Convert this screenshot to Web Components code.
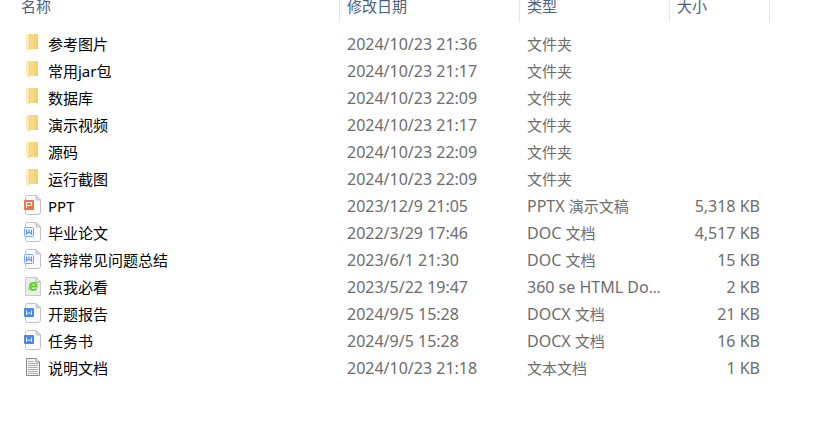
<!DOCTYPE html>
<html lang="zh-CN">
<head>
<meta charset="utf-8">
<title>文件</title>
<style>
  body {
    margin: 0;
    background: #fff;
    font-family: "Noto Sans", "Noto Sans CJK SC", sans-serif;
    font-size: 15px;
  }
</style>
</head>
<body>
<file-list>
  <file-entry icon="folder" modified="2024/10/23 21:36" type="文件夹">参考图片</file-entry>
  <file-entry icon="folder" modified="2024/10/23 21:17" type="文件夹">常用jar包</file-entry>
  <file-entry icon="folder" modified="2024/10/23 22:09" type="文件夹">数据库</file-entry>
  <file-entry icon="folder" modified="2024/10/23 21:17" type="文件夹">演示视频</file-entry>
  <file-entry icon="folder" modified="2024/10/23 22:09" type="文件夹">源码</file-entry>
  <file-entry icon="folder" modified="2024/10/23 22:09" type="文件夹">运行截图</file-entry>
  <file-entry icon="slides" modified="2023/12/9 21:05" type="PPTX 演示文稿" size="5,318 KB">PPT</file-entry>
  <file-entry icon="doc" modified="2022/3/29 17:46" type="DOC 文档" size="4,517 KB">毕业论文</file-entry>
  <file-entry icon="doc" modified="2023/6/1 21:30" type="DOC 文档" size="15 KB">答辩常见问题总结</file-entry>
  <file-entry icon="html" modified="2023/5/22 19:47" type="360 se HTML Document" size="2 KB">点我必看</file-entry>
  <file-entry icon="docx" modified="2024/9/5 15:28" type="DOCX 文档" size="21 KB">开题报告</file-entry>
  <file-entry icon="docx" modified="2024/9/5 15:28" type="DOCX 文档" size="16 KB">任务书</file-entry>
  <file-entry icon="text" modified="2024/10/23 21:18" type="文本文档" size="1 KB">说明文档</file-entry>
</file-list>

<script>
const PAGE = `
  <path d="M3.5.5H12L16.5 5V17Q16.5 19.5 14 19.5H3.5Q1.5 19.5 1.5 17.5V2.5Q1.5.5 3.5.5Z" fill="#fcfcfc" stroke="#c2c2c2"/>
  <path d="M12 .5V5H16.5Z" fill="#dcdcdc" stroke="#c2c2c2" stroke-linejoin="round"/>`;

const ICONS = {
  folder: `
    <path d="M4 1H14V16H4Z" fill="#f8da86"/>
    <path d="M10 1H14V16H10Z" fill="#f5d178"/>
    <path d="M13 12H14V16H13Z" fill="#edc45f"/>
    <path d="M2 1L5 3V18L2 16Z" fill="#ffecb3"/>
    <path d="M5.3 3V17.5" stroke="#f1cc72" stroke-width=".7"/>`,
  slides: PAGE + `
    <rect x="0" y="5" width="10" height="10" rx="1" fill="#f4703f"/>
    <path d="M2.5 13V7.5H7.5V10.500H3" fill="none" stroke="#fff" stroke-width="1.2"/>`,
  doc: PAGE + `
    <rect x=".5" y="5.500" width="9" height="9" rx="1" fill="#fff" stroke="#77a5f8"/>
    <path d="M2.500 7.500V12L5 10L7.500 12V7.500M5 7.500V10" fill="none" stroke="#5a92f5" stroke-width="1.3"/>`,
  docx: PAGE + `
    <rect x="0" y="5" width="10" height="9" rx="1" fill="#4a87ee"/>
    <path d="M2.500 7.500V11.500L5 9.500L7.500 11.500V7.500" fill="none" stroke="#e6effd" stroke-width="1"/>`,
  html: `
    <path d="M1.5 1.5H12L16.5 6V19.5H1.5Z" fill="#ebebeb" stroke="#cacaca"/>
    <path d="M12 1.5V6H16.5Z" fill="#fff" stroke="#b5b5b5"/>
    <path d="M6 10.500H12.500Q12.500 7 9.300 7Q6 7 6 10.500Q6 14 9.300 14Q11.500 14 12.300 12.500" fill="none" stroke="#5fd02f" stroke-width="2"/>
    <path d="M4.500 14.500Q4 12 8 8.500Q12 5.500 14 6.500" fill="none" stroke="#7bdc48"/>`,
  text: `
    <path d="M2.500 1.500H12L15.500 5V18.500H2.500Z" fill="#f7f7f7" stroke="#858585"/>
    <path d="M12 1.500V5H15.500" fill="#fff" stroke="#858585"/>
    <path d="M4 4.500H10M4 6.500H14M4 8.500H14M4 10.500H14M4 12.500H14M4 14.500H14M4 16.500H14" stroke="#acacac"/>`
};

class FileIcon extends HTMLElement {
  constructor() {
    super();
    this.attachShadow({ mode: "open" });
  }

  connectedCallback() {
    this.shadowRoot.innerHTML = `
      <style>
        :host {
          display: block;
          flex: none;
        }

        svg {
          display: block;
        }
      </style>
      <svg width="18" height="23" viewBox="0 0 18 23" aria-hidden="true">${ICONS[this.getAttribute("name")] || PAGE}</svg>
    `;
  }
}

// Holds the data of one row; file-list draws it
class FileEntry extends HTMLElement {
  constructor() {
    super();
    this.attachShadow({ mode: "open" });
    this.shadowRoot.innerHTML = `
      <style>
        :host {
          display: inline;
        }
      </style>
      <slot></slot>
    `;
  }

  get icon() {
    return this.getAttribute("icon");
  }

  get modified() {
    return this.getAttribute("modified");
  }

  get type() {
    return this.getAttribute("type");
  }

  get size() {
    return this.getAttribute("size") || "";
  }
}

class FileList extends HTMLElement {
  constructor() {
    super();
    this.attachShadow({ mode: "open", slotAssignment: "manual" });
    this.render();
  }

  render() {
    const styles = `
      <style>
        :host {
          display: block;
        }

        table {
          width: 100%;
          table-layout: fixed;
          border-collapse: separate;
          border-spacing: 0;
        }

        .name { width: 340px; }
        .modified { width: 180px; }
        .type { width: 150px; }
        .size { width: 100px; }

        th {
          box-sizing: border-box;
          height: 22px;
          padding: 0 7px;
          border-right: 1px solid #e5e5e5;
          text-align: left;
          vertical-align: top;
        }

        th:first-child {
          padding-left: 21px;
        }

        button {
          display: block;
          padding: 0;
          border: 0;
          background: none;
          color: #4c607a;
          font: inherit;
          font-weight: 400;
          line-height: 12px;
        }

        tbody::before {
          content: "";
          display: block;
          height: 9px;
        }

        td {
          height: 27px;
          padding: 0 10px 0 7px;
          overflow: hidden;
          color: #6d6d6d;
          line-height: 27px;
          text-overflow: ellipsis;
          white-space: nowrap;
        }

        td:first-child {
          padding-left: 24px;
          color: #000;
        }

        td:nth-child(3) {
          padding-right: 7px;
        }

        td:nth-child(4) {
          text-align: right;
        }

        /* Latin letters run small beside the Chinese ones */
        .latin {
          font-size: 16px;
          line-height: 1;
        }

        .label {
          display: flex;
          align-items: center;
          gap: 6px;
        }
      </style>
    `;

    this.shadowRoot.innerHTML = styles + `
      <table>
        <colgroup>
          <col class="name"><col class="modified"><col class="type"><col class="size"><col>
        </colgroup>
        <thead>
          <tr>
            <th scope="col"><button type="button">名称</button></th>
            <th scope="col"><button type="button">修改日期</button></th>
            <th scope="col"><button type="button">类型</button></th>
            <th scope="col"><button type="button">大小</button></th>
          </tr>
        </thead>
        <tbody></tbody>
      </table>
    `;
  }

  markLatin(text) {
    return text.replace(/[ -~]+/g, '<span class="latin">$&</span>');
  }

  connectedCallback() {
    const body = this.shadowRoot.querySelector("tbody");
    body.replaceChildren();

    for (const entry of this.querySelectorAll("file-entry")) {
      const row = body.insertRow();
      row.innerHTML = `
        <td><div class="label"><file-icon name="${entry.icon}"></file-icon><slot></slot></div></td>
        <td>${this.markLatin(entry.modified)}</td>
        <td>${this.markLatin(entry.type)}</td>
        <td>${this.markLatin(entry.size)}</td>
      `;
      row.querySelector("slot").assign(entry);
    }
  }
}

customElements.define("file-icon", FileIcon);
customElements.define("file-entry", FileEntry);
customElements.define("file-list", FileList);
</script>
</body>
</html>
